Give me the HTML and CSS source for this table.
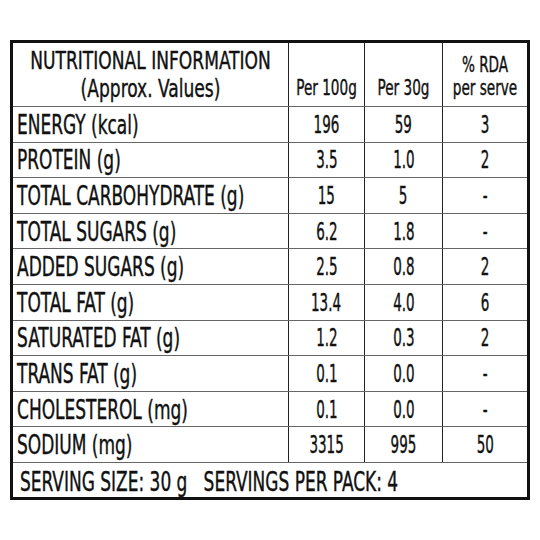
FILE: index.html
```html
<!DOCTYPE html>
<html lang="en">

<head>
    <meta charset="UTF-8">
    <meta name="viewport" content="width=device-width, initial-scale=1.0">
    <title>Nutritional Information</title>
    <link rel="stylesheet" href="styles.css">
</head>

<body>
    <table class="nutri">
        <thead>
            <tr>
                <th class="title">
                    <div class="ttl">NUTRITIONAL INFORMATION</div>
                    <div class="ttl">(Approx. Values)</div>
                </th>
                <th class="unit"><div class="hd">Per 100g</div></th>
                <th class="unit"><div class="hd">Per 30g</div></th>
                <th class="unit"><div class="hd">% RDA</div><div class="hd">per serve</div></th>
            </tr>
        </thead>
        <tbody>
            <tr><td><span class="lbl">ENERGY (kcal)</span></td><td><span class="num">196</span></td><td><span class="num">59</span></td><td><span class="num">3</span></td></tr>
            <tr><td><span class="lbl">PROTEIN (g)</span></td><td><span class="num">3.5</span></td><td><span class="num">1.0</span></td><td><span class="num">2</span></td></tr>
            <tr><td><span class="lbl">TOTAL CARBOHYDRATE (g)</span></td><td><span class="num">15</span></td><td><span class="num">5</span></td><td><span class="num">-</span></td></tr>
            <tr><td><span class="lbl">TOTAL SUGARS (g)</span></td><td><span class="num">6.2</span></td><td><span class="num">1.8</span></td><td><span class="num">-</span></td></tr>
            <tr><td><span class="lbl">ADDED SUGARS (g)</span></td><td><span class="num">2.5</span></td><td><span class="num">0.8</span></td><td><span class="num">2</span></td></tr>
            <tr><td><span class="lbl">TOTAL FAT (g)</span></td><td><span class="num">13.4</span></td><td><span class="num">4.0</span></td><td><span class="num">6</span></td></tr>
            <tr><td><span class="lbl">SATURATED FAT (g)</span></td><td><span class="num">1.2</span></td><td><span class="num">0.3</span></td><td><span class="num">2</span></td></tr>
            <tr><td><span class="lbl">TRANS FAT (g)</span></td><td><span class="num">0.1</span></td><td><span class="num">0.0</span></td><td><span class="num">-</span></td></tr>
            <tr><td><span class="lbl">CHOLESTEROL (mg)</span></td><td><span class="num">0.1</span></td><td><span class="num">0.0</span></td><td><span class="num">-</span></td></tr>
            <tr><td><span class="lbl">SODIUM (mg)</span></td><td><span class="num">3315</span></td><td><span class="num">995</span></td><td><span class="num">50</span></td></tr>
        </tbody>
        <tfoot>
            <tr><td colspan="4"><span class="lbl">SERVING SIZE: 30 g &nbsp; SERVINGS PER PACK: 4</span></td></tr>
        </tfoot>
    </table>
</body>

</html>
```

FILE: styles.css
```css
body {
    margin: 0;
    padding: 40px 0 0 10px;
    background: #fff;
    color: #111;
    font-family: "DejaVu Sans Condensed", "DejaVu Sans", sans-serif;
}

.nutri {
    width: 520px;
    border-collapse: collapse;
    border: 3px solid #111;
    table-layout: fixed;
    -webkit-text-stroke: 0.4px #111;
}

.nutri th,
.nutri td {
    border-top: 1px solid #666;
    border-bottom: 1px solid #666;
    border-left: 1px solid #222;
    border-right: 1px solid #222;
    padding: 0;
    font-weight: normal;
    white-space: nowrap;
}

.nutri th:nth-child(1) { width: 275px; }
.nutri th:nth-child(2) { width: 75px; }
.nutri th:nth-child(3) { width: 77px; }

/* the label font is very narrow, so the text is squeezed sideways */
.lbl,
.num {
    display: inline-block;
    white-space: nowrap;
}

.title {
    height: 63px;
    vertical-align: middle;
    font-size: 25px;
    line-height: 28px;
}

.ttl {
    display: flex;
    justify-content: center;
    transform: scaleX(0.76);
}

.unit {
    font-size: 21px;
    line-height: 23px;
    vertical-align: bottom;
    padding-bottom: 6px !important;
}

.hd {
    display: flex;
    justify-content: center;
    transform: scaleX(0.72);
}

tbody td {
    height: 34.6px;
    font-size: 25px;
    line-height: 33px;
    text-align: center;
    vertical-align: middle;
}

.num {
    transform: scaleX(0.6);
}

.lbl {
    transform: scaleX(0.7);
    transform-origin: left center;
}

tbody td:first-child {
    text-align: left;
    padding-left: 4px;
    font-size: 27px;
}

tfoot td {
    height: 34px;
    font-size: 27px;
    line-height: 30px;
    vertical-align: bottom;
    padding-left: 7px !important;
}
```
